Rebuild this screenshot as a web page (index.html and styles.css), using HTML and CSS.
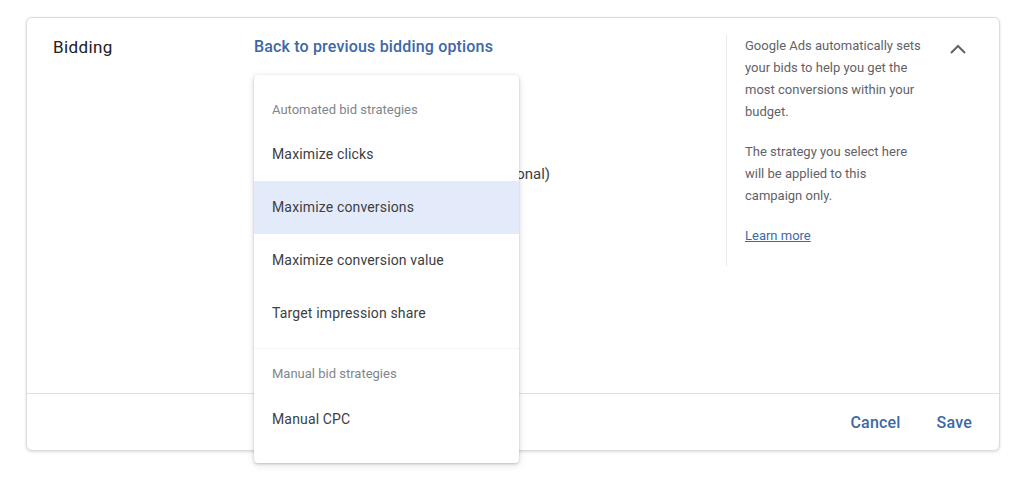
FILE: index.html
```html
<!DOCTYPE html>
<html>
<head>
<meta charset="utf-8">
<link rel="stylesheet" href="styles.css">
</head>
<body>
<div class="card">
  <div class="main">
    <div class="title-col">Bidding</div>
    <div class="mid-col">
      <a class="back-link">Back to previous bidding options</a>
      <div class="hidden-row">Set a target cost per action (optional)</div>
      <div class="menu">
        <div class="menu-header first">Automated bid strategies</div>
        <div class="menu-item">Maximize clicks</div>
        <div class="menu-item selected">Maximize conversions</div>
        <div class="menu-item">Maximize conversion value</div>
        <div class="menu-item">Target impression share</div>
        <div class="menu-divider"></div>
        <div class="menu-header">Manual bid strategies</div>
        <div class="menu-item">Manual CPC</div>
      </div>
    </div>
    <div class="help-col">
      <p>Google Ads automatically sets your bids to help you get the most conversions within your budget.</p>
      <p>The strategy you select here will be applied to this campaign only.</p>
      <a class="learn">Learn more</a>
    </div>
    <div class="chevron-col">
      <svg width="18" height="12" viewBox="0 0 18 12"><path d="M2 10 L9 3 L16 10" fill="none" stroke="#5f6368" stroke-width="2"/></svg>
    </div>
  </div>
  <div class="footer">
    <a class="btn">Cancel</a>
    <a class="btn">Save</a>
  </div>
</div>
</body>
</html>
```
FILE: styles.css
```css
* { box-sizing: border-box; }
html, body { margin: 0; padding: 0; background: #ffffff; }
body {
  font-family: Roboto, "Liberation Sans", Arial, sans-serif;
  color: #3c4043;
  width: 1024px;
  height: 478px;
  overflow: hidden;
}
.card {
  margin: 17px 0 0 26px;
  width: 974px;
  height: 434px;
  border: 1px solid #dadce0;
  border-radius: 6px;
  box-shadow: 0 1px 3px rgba(0,0,0,0.14);
  display: flex;
  flex-direction: column;
  background: #fff;
}
.main {
  height: 375px;
  display: flex;
}
.title-col {
  width: 227px;
  padding: 17px 0 0 26px;
  font-size: 17px;
  line-height: 24px;
  color: #202124;
  font-weight: 400;
  letter-spacing: 0.4px;
}
.mid-col {
  position: relative;
  width: 472px;
  padding-top: 17px;
}
.back-link {
  display: block;
  font-size: 16px;
  line-height: 24px;
  color: #3d68a8;
  font-weight: 500;
  letter-spacing: 0.17px;
}
.hidden-row {
  width: 296px;
  margin-top: 104px;
  text-align: right;
  font-size: 15px;
  line-height: 22px;
  color: #3c4043;
}
.menu {
  position: absolute;
  top: 57px;
  left: 0;
  width: 265px;
  height: 388px;
  background: #fff;
  border-radius: 4px;
  box-shadow: 0 1px 3px rgba(0,0,0,0.22), 0 2px 8px rgba(0,0,0,0.10);
  padding-top: 8px;
}
.menu-header {
  height: 45px;
  padding: 18px 0 0 18px;
  font-size: 13px;
  line-height: 18px;
  color: #80868b;
}
.menu-header:not(.first) { height: 44px; padding-top: 16px; }
.menu-item {
  height: 53px;
  padding-left: 18px;
  padding-bottom: 1px;
  display: flex;
  align-items: center;
  font-size: 14px;
  letter-spacing: 0.15px;
  color: #3c4043;
}
.menu-item.selected { background: #e3ebfa; }
.menu-divider {
  height: 1px;
  margin: 8px 0 0 0;
  background: #f1f3f4;
}
.help-col {
  width: 205px;
  margin-top: 17px;
  height: 231px;
  border-left: 1px solid #e8eaed;
  padding: 0 0 0 18px;
  font-size: 13px;
  line-height: 22px;
  color: #5f6368;
}
.help-col p {
  margin: 0 0 18px 0;
  width: 181px;
}
.learn {
  display: block;
  color: #3d68a8;
  text-decoration: underline;
}
.chevron-col {
  padding: 22px 0 0 18px;
}
.footer {
  flex: 1;
  border-top: 1px solid #e0e0e0;
  display: flex;
  justify-content: flex-end;
  align-items: center;
  gap: 36px;
  padding-right: 27px;
}
.btn {
  font-size: 16px;
  font-weight: 500;
  color: #3d68a8;
  letter-spacing: 0.2px;
}
```
